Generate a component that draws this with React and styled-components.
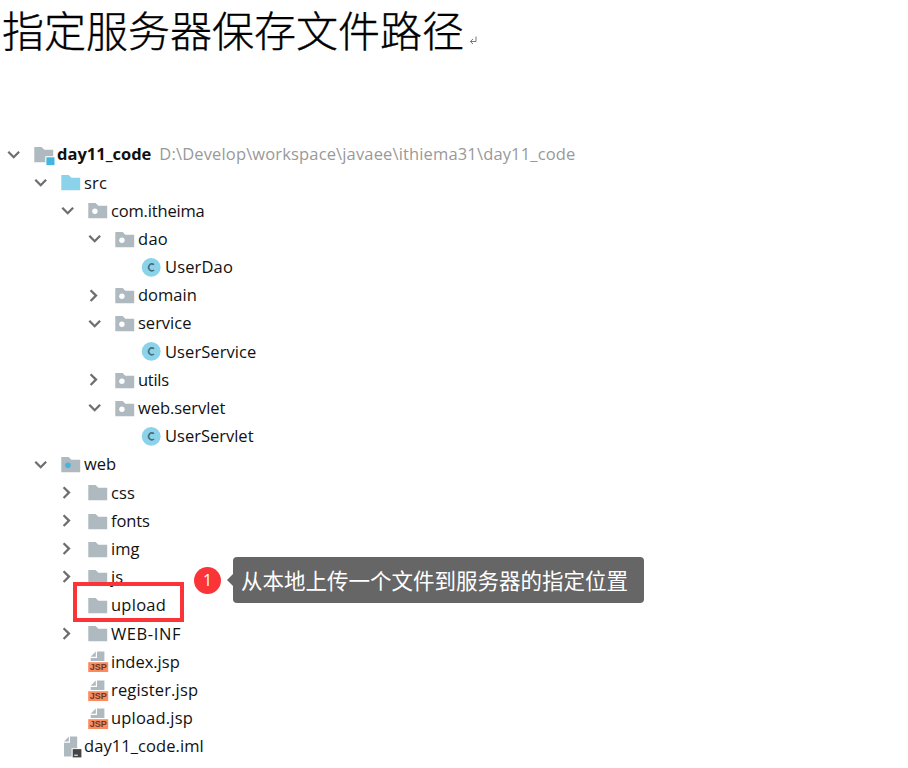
import React from 'react';
import styled, { createGlobalStyle } from 'styled-components';

const GlobalStyle = createGlobalStyle`
    body {
        margin: 0;
        background: #fff;
        overflow: hidden;
    }
    * {
        box-sizing: border-box;
    }
`

const Page = styled.main`
    width: 908px;
    height: 768px;
    font-family: "Open Sans", "Noto Sans", "Noto Sans CJK SC", sans-serif;
`

const Heading = styled.h1`
    display: flex;
    align-items: center;
    height: 62px;
    margin: 0;
    padding-left: 2px;
    color: #000;
    font-family: "Open Sans", "Noto Sans CJK SC", sans-serif;
    font-size: 42px;
    font-weight: 300;
    line-height: 62px;
    white-space: nowrap;
    -webkit-text-stroke: 0.35px #000;
`

const ReturnMark = styled.svg`
    width: 8px;
    height: 9px;
    margin: 18px 0 0 5px;
`

const Tree = styled.ul`
    margin: 0;
    padding: 78px 0 0;
    list-style: none;
`

const Row = styled.li`
    position: relative;
    display: flex;
    align-items: center;
    height: 28.19px;
    padding-left: ${({ $level }) => 6 + $level * 27}px;
`

const Arrow = styled.svg`
    flex: none;
    width: 15px;
    height: 15px;
    margin-right: 12px;
`

const Icon = styled.svg`
    flex: none;
    width: 24px;
    height: 24px;
    overflow: visible;
`

const Label = styled.span`
    padding-top: 0.5px;
    color: ${({ $muted }) => ($muted ? '#999' : '#111')};
    font-size: 16.5px;
    font-weight: ${({ $bold }) => ($bold ? 700 : 400)};
    letter-spacing: ${({ $tracking }) => $tracking || 0}px;
    line-height: 28px;
    white-space: pre;
`

const Path = styled(Label)`
    margin-left: 8px;
`

const Highlight = styled.div`
    position: absolute;
    top: -9.5px;
    left: 73px;
    width: 111px;
    height: 40px;
    border: 4px solid #fb3537;
`

const Note = styled.div`
    position: absolute;
    top: -34px;
    left: 194px;
    display: flex;
    align-items: center;
`

const Step = styled.span`
    width: 27px;
    height: 27px;
    border-radius: 50%;
    background: #fb3537;
    color: #fff;
    font-size: 16px;
    line-height: 26px;
    text-align: center;
`

const Bubble = styled.div`
    position: relative;
    height: 46px;
    width: 411px;
    margin-left: 12px;
    padding-left: 8px;
    border-radius: 4px;
    background: #666;
    color: #fff;
    font-family: "Noto Sans CJK SC", sans-serif;
    font-size: 21.5px;
    font-weight: 400;
    line-height: 45px;
    white-space: nowrap;

    &::before {
        content: '';
        position: absolute;
        top: 17px;
        left: -6px;
        border: 6px solid transparent;
        border-left: 0;
        border-right-color: #666;
    }
`

const Chevron = ({ state }) => (
    <Arrow viewBox="0 0 15 15" fill="none" stroke="#6e6e6e" strokeWidth="2.3">
        {state === 'open' && <path d="M2.3 4.8 7.7 10.2 13.1 4.8" />}
        {state === 'closed' && <path d="M3.6 2.2 9 7.6 3.6 13" />}
    </Arrow>
)

const Folder = ({ fill = '#aeb9c0', children }) => (
    <Icon viewBox="0 0 24 24">
        <path d="M1.3 5h7.3l2.8 2.7h8.8v12.5H1.3z" fill={fill} />
        {children}
    </Icon>
)

const icons = {
    module: (
        <Folder>
            <path d="M12.3 14.2h9.2v8.8h-9.2z" fill="#fff" />
            <path d="M13.4 15.3h8.1v7.8h-8.1z" fill="#40b6e0" />
        </Folder>
    ),
    source: <Folder fill="#8ad3eb" />,
    package: <Folder><circle cx="7.9" cy="13.3" r="2.7" fill="#fff" /></Folder>,
    web: <Folder><circle cx="7.9" cy="13.3" r="2.8" fill="#40b6e0" /></Folder>,
    folder: <Folder />,
    class: (
        <Icon viewBox="0 0 24 24">
            <circle cx="10.2" cy="12.4" r="9.4" fill="#8ad3eb" />
            <path d="M13 9.8a3.2 3.5 0 1 0 0 5.2" fill="none" stroke="#4b6c79" strokeWidth="1.6" />
        </Icon>
    ),
    jsp: (
        <Icon viewBox="0 0 24 24">
            <path d="M10 2.6h7.4v9.3H3.7V8.9H10z" fill="#aeb9c0" />
            <path d="M3.7 7.7 8.8 2.6v5.1z" fill="#aeb9c0" />
            <path d="M1.2 13.2h20v9.8h-20z" fill="#f98b5e" />
            <text x="11.2" y="21.4" fill="#6b382c" fontFamily="Liberation Sans" fontSize="9" fontWeight="700" textAnchor="middle">JSP</text>
        </Icon>
    ),
    module_file: (
        <Icon viewBox="0 0 24 24">
            <path d="M10 2.6h7.2v11.6h-5.6v8.4H4V8.8h6z" fill="#aeb9c0" />
            <path d="M4 7.6 8.9 2.6v5z" fill="#aeb9c0" />
            <path d="M12.7 15.1h8.7v8.3h-8.7z" fill="#444" />
            <path d="M14.2 20.6h3.6v1.3h-3.6z" fill="#ddd" />
        </Icon>
    ),
}

const rows = [
    { level: 0, state: 'open', icon: 'module', label: 'day11_code', bold: true, path: 'D:\\Develop\\workspace\\javaee\\ithiema31\\day11_code' },
    { level: 1, state: 'open', icon: 'source', label: 'src', tracking: 0.2 },
    { level: 2, state: 'open', icon: 'package', label: 'com.itheima', tracking: -0.17 },
    { level: 3, state: 'open', icon: 'package', label: 'dao', tracking: 0.3 },
    { level: 4, icon: 'class', label: 'UserDao', tracking: 0.15 },
    { level: 3, state: 'closed', icon: 'package', label: 'domain' },
    { level: 3, state: 'open', icon: 'package', label: 'service' },
    { level: 4, icon: 'class', label: 'UserService', tracking: 0.08 },
    { level: 3, state: 'closed', icon: 'package', label: 'utils', tracking: -0.3 },
    { level: 3, state: 'open', icon: 'package', label: 'web.servlet', tracking: -0.05 },
    { level: 4, icon: 'class', label: 'UserServlet' },
    { level: 1, state: 'open', icon: 'web', label: 'web' },
    { level: 2, state: 'closed', icon: 'folder', label: 'css', tracking: 0.1 },
    { level: 2, state: 'closed', icon: 'folder', label: 'fonts', tracking: -0.1 },
    { level: 2, state: 'closed', icon: 'folder', label: 'img' },
    { level: 2, state: 'closed', icon: 'folder', label: 'js' },
    { level: 2, icon: 'folder', label: 'upload', tracking: 0.25, note: '从本地上传一个文件到服务器的指定位置' },
    { level: 2, state: 'closed', icon: 'folder', label: 'WEB-INF', tracking: 0.6 },
    { level: 2, icon: 'jsp', label: 'index.jsp' },
    { level: 2, icon: 'jsp', label: 'register.jsp', tracking: 0.15 },
    { level: 2, icon: 'jsp', label: 'upload.jsp', tracking: 0.2 },
    { level: 1, icon: 'module_file', label: 'day11_code.iml', tracking: 0.07 },
]

const TreeRow = ({ level, state, icon, label, bold, tracking, path, note }) => (
    <Row $level={level}>
        <Chevron state={state} />
        {icons[icon]}
        <Label $bold={bold} $tracking={tracking}>{label}</Label>
        {path && <Path $muted $tracking={0.15}>{path}</Path>}
        {note && (
            <>
                <Highlight />
                <Note>
                    <Step>1</Step>
                    <Bubble>{note}</Bubble>
                </Note>
            </>
        )}
    </Row>
)

const App = () => (
    <Page>
        <GlobalStyle />
        <Heading>
            指定服务器保存文件路径
            <ReturnMark viewBox="0 0 8 9" fill="none" stroke="#777">
                <path d="M7 .5v5H1.5M4 3 1.3 5.5 4 8" />
            </ReturnMark>
        </Heading>
        <Tree>
            {rows.map((row, index) => <TreeRow key={index} {...row} />)}
        </Tree>
    </Page>
)

export default App
